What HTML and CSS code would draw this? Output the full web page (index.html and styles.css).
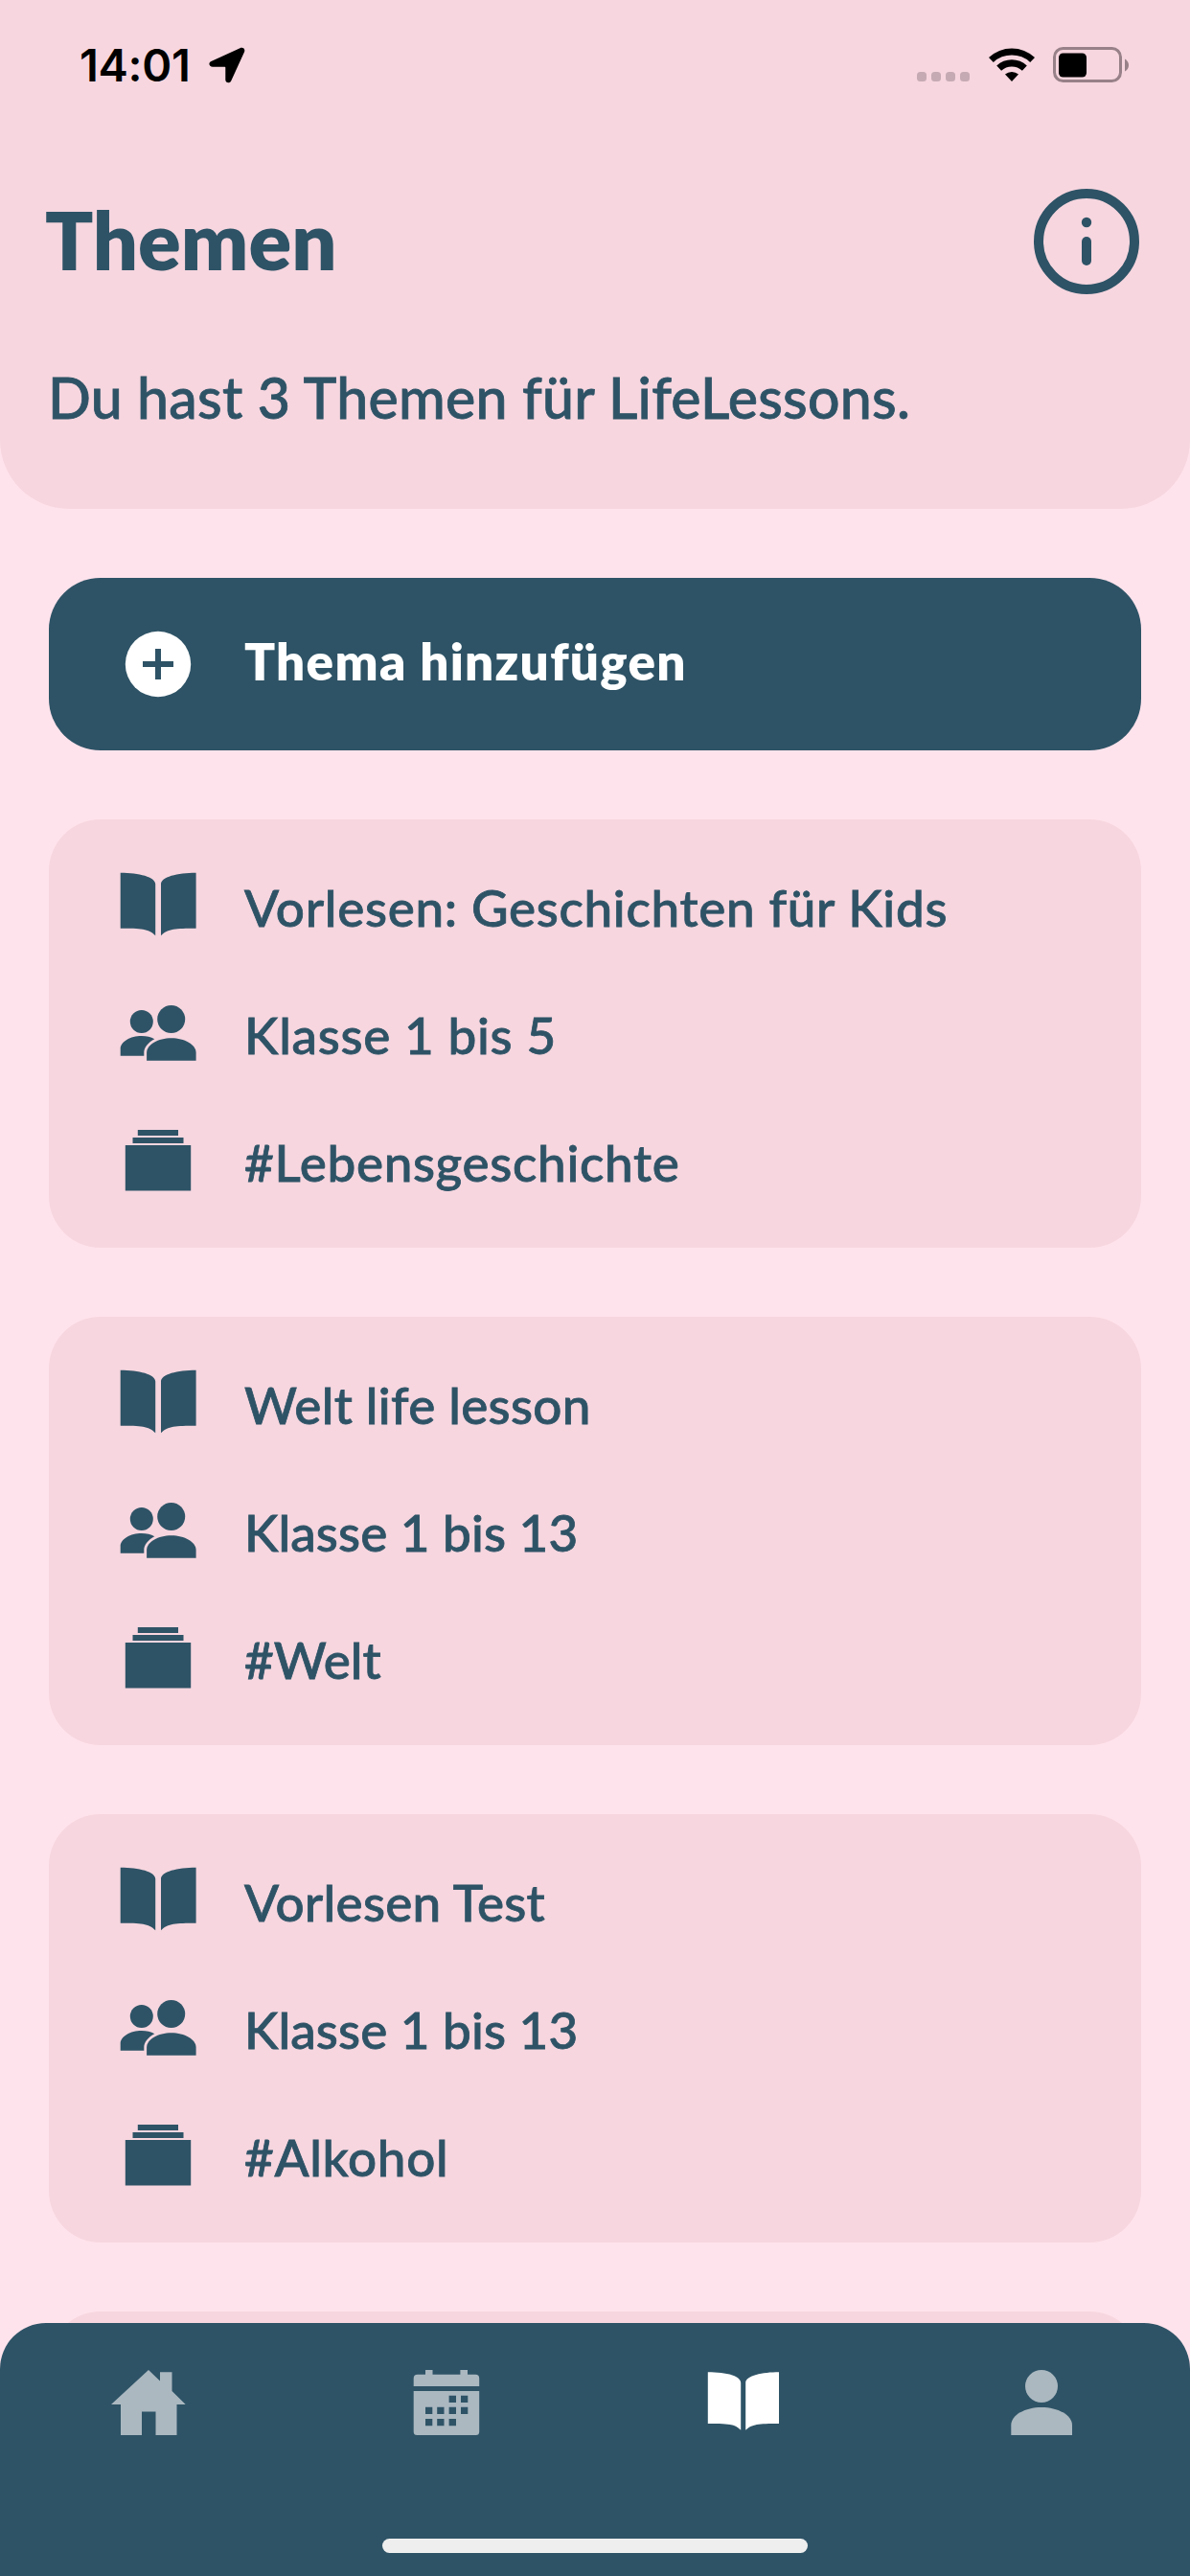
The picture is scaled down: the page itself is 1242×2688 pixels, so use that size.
FILE: index.html
```html
<!DOCTYPE html>
<html lang="de">
<head>
<meta charset="utf-8">
<title>Themen</title>
<link rel="stylesheet" href="styles.css">
</head>
<body>
<svg class="symbols" aria-hidden="true">
  <symbol id="book" viewBox="0 0 84 84"><path d="M2.7 6.7C22 6.7 39.2 11 39.2 18.5V72.2C32 65 24 64.8 2.7 64.8ZM81.6 6.7C62 6.7 45 11 45 18.5V72.2C52.500 65 60 64.800 81.600 64.800Z"/></symbol>
  <symbol id="people" viewBox="0 0 84 84"><circle cx="55.700" cy="26.500" r="14.500"/><circle cx="24.800" cy="29" r="12"/><path d="M30.100 69.800V61.500C30.100 53 42 46.300 55.800 46.300S81.600 53 81.600 61.500V69.800Z"/><path d="M2.700 64.700V57.500C2.700 50 13 44 24.800 44C30 44 34.500 45.200 38.300 47.200C32 50.500 27.300 56 27.300 61V64.700Z"/></symbol>
  <symbol id="collection" viewBox="0 0 84 84"><path d="M20.800 9H63V15H20.800ZM15.500 17H68.500V23H15.500ZM7.800 25H76.200V72.500H7.800Z"/></symbol>
</svg>
<div class="screen">
  <header class="header">
    <div class="status">
      <span class="time">14:01</span>
      <svg class="location" viewBox="0 0 38 38"><path d="M32.500 1.200C35.500-.2 38.300 2 37 5.200L23.300 35.200C21.800 38.500 17.300 37.600 17.300 34.200V21.500Q17.300 20.800 16.600 20.800H4C.2 20.800-1 16.600 2.400 15Z"/></svg>
      <svg class="signal" viewBox="0 0 56 38"><rect x="0" y="26" width="10" height="10" rx="3.500"/><rect x="15" y="26" width="10" height="10" rx="3.500"/><rect x="30" y="26" width="10" height="10" rx="3.500"/><rect x="45" y="26" width="10" height="10" rx="3.500"/></svg>
      <svg class="wifi" viewBox="0 0 48 38"><path d="M0 11A35 35 0 0 1 48 11L43.200 16A28 28 0 0 0 4.800 16ZM8.200 19.500A23 23 0 0 1 39.800 19.500L34.900 24.700A16 16 0 0 0 13.100 24.700ZM17 28.500A11 11 0 0 1 31 28.500L24 36Z"/></svg>
      <svg class="battery" viewBox="0 0 80 38"><rect class="case" x="1.500" y="1.500" width="69" height="34" rx="9"/><path class="nub" d="M75 12.500Q79 15 79 19T75 25.500Z"/><rect x="6" y="6.500" width="29" height="25" rx="4.500"/></svg>
    </div>
    <div class="heading">
      <h1 class="title">Themen</h1>
      <svg class="info" viewBox="0 0 110 110"><circle class="ring" cx="55" cy="55" r="50"/><circle cx="55" cy="35" r="5.200"/><rect x="50" y="50" width="10" height="30" rx="5"/></svg>
    </div>
    <p class="subtitle">Du hast 3 Themen für LifeLessons.</p>
  </header>

  <main class="list">
    <button class="add">
      <svg class="icon" viewBox="0 0 84 84"><circle cx="42" cy="42" r="34.200"/><path class="plus" d="M42 26V58M26 42H58"/></svg>
      <span class="add-label">Thema hinzufügen</span>
    </button>
    <section class="card">
      <div class="row"><svg class="icon"><use href="#book"/></svg><span class="label wide">Vorlesen: Geschichten für Kids</span></div>
      <div class="row"><svg class="icon"><use href="#people"/></svg><span class="label wide">Klasse 1 bis 5</span></div>
      <div class="row"><svg class="icon"><use href="#collection"/></svg><span class="label wide">#Lebensgeschichte</span></div>
    </section>
    <section class="card">
      <div class="row"><svg class="icon"><use href="#book"/></svg><span class="label medium">Welt life lesson</span></div>
      <div class="row"><svg class="icon"><use href="#people"/></svg><span class="label narrow">Klasse 1 bis 13</span></div>
      <div class="row"><svg class="icon"><use href="#collection"/></svg><span class="label">#Welt</span></div>
    </section>
    <section class="card">
      <div class="row"><svg class="icon"><use href="#book"/></svg><span class="label medium">Vorlesen Test</span></div>
      <div class="row"><svg class="icon"><use href="#people"/></svg><span class="label narrow">Klasse 1 bis 13</span></div>
      <div class="row"><svg class="icon"><use href="#collection"/></svg><span class="label wide">#Alkohol</span></div>
    </section>
    <section class="card"></section>
  </main>

  <nav class="tabs">
    <div class="tab-row">
      <svg class="icon" viewBox="0 0 84 84"><path d="M42 8L54 19.500V10.300H66.500V30L80.700 44H71.500V76H49.500V51.500H35V76H13V44H3Z"/></svg>
      <svg class="icon" viewBox="0 0 84 84"><path fill-rule="evenodd" d="M11.700 12.700H20V8H27.500V12.700H56.400V8H64V12.700H72.200Q76.200 12.700 76.200 16.700V25H7.700V16.700Q7.700 12.700 11.700 12.700ZM7.700 30H76.200V72.500Q76.200 76 72.700 76H11.200Q7.700 76 7.700 72.500ZM44.600 34.700V42H52V34.700ZM57 34.700V42H64.300V34.700ZM20 46.800V54H27.300V46.800ZM32.200 46.800V54H39.500V46.800ZM44.600 46.800V54H52V46.800ZM57 46.800V54H64.300V46.800ZM20 59V66.300H27.300V59ZM32.200 59V66.300H39.500V59ZM44.600 59V66.300H52V59Z"/></svg>
      <svg class="icon active" viewBox="0 0 84 84"><path d="M4.800 10.200C22 10.200 39.200 13.500 39.200 21.500V70.800C33 64.500 27 64 4.800 64ZM79 10.200C62 10.200 44.200 13.500 44.200 21.500V70.800C51 64.500 57 64 79 64Z"/></svg>
      <svg class="icon" viewBox="0 0 84 84"><circle cx="42" cy="25" r="17"/><path d="M10.300 76V65.500C10.300 55 25 47 42 47S74 55 74 65.500V76Z"/></svg>
    </div>
    <div class="home-indicator"></div>
  </nav>
</div>
</body>
</html>
```
FILE: styles.css
```css
* { box-sizing: border-box; }
body { margin: 0; background: #ffe3ec; color: #2e5366; font-family: Lato, "Liberation Sans", sans-serif; font-weight: 500; }
.symbols { display: none; }
.screen { height: 2688px; display: grid; grid-template-rows: 531px 1893px 264px; overflow: hidden; }

.header { background: #f7d6df; border-radius: 0 0 72px 72px; }
.status { height: 136px; padding: 0 63px 0 83px; display: flex; align-items: center; fill: #000; }
.time { width: 119px; color: #000; font: 600 47px/60px Inter, "Liberation Sans", sans-serif; letter-spacing: -0.3px; white-space: nowrap; }
.location { width: 38px; height: 38px; margin-left: 16px; }
.signal { width: 56px; height: 38px; margin-left: auto; fill: #c5aab3; }
.wifi { width: 48px; height: 38px; margin: 0 19px; }
.battery { width: 80px; height: 38px; }
.case { fill: none; stroke: #988188; stroke-width: 3; }
.nub { fill: #988188; }

.heading { height: 232px; padding: 0 53px 0 47px; display: flex; align-items: center; justify-content: space-between; }
.title { margin: 0; padding-bottom: 5px; font-size: 83px; line-height: 110px; font-weight: 800; }
.info { width: 110px; height: 110px; fill: #2e5366; }
.ring { fill: none; stroke: #2e5366; stroke-width: 10; }
.subtitle { margin: 7px 0 0 50px; font-size: 59px; line-height: 80px; letter-spacing: 0.25px; white-space: nowrap; -webkit-text-stroke: 0.8px #2e5366; }

.list { padding: 72px 51px 0; display: flex; flex-direction: column; gap: 72px; overflow: visible; min-height: 0; }
.add, .card { flex: none; border-radius: 54px; padding: 0 72px; border: 0; }
.add { height: 180px; display: flex; align-items: center; gap: 48px; background: #2e5366; color: #fff; fill: #fff; font-family: inherit; font-size: 53px; font-weight: 800; }
.add-label { padding-bottom: 7px; letter-spacing: 1.3px; }
.plus { stroke: #2e5366; stroke-width: 6; }
.icon { width: 84px; height: 84px; flex: none; }
.card { height: 447px; padding-top: 24px; background: #f7d6df; fill: #2e5366; }
.row { height: 133px; display: flex; align-items: center; gap: 48px; font-size: 53px; line-height: 64px; white-space: nowrap; }
.label { padding-top: 2px; -webkit-text-stroke: 0.8px #2e5366; }
.wide { letter-spacing: 0.7px; }
.medium { letter-spacing: 0.3px; }
.narrow { letter-spacing: 0.1px; }

.tabs { padding-top: 41px; background: #2e5366; border-radius: 48px 48px 0 0; position: relative; display: flex; flex-direction: column; }
.tab-row { display: grid; grid-template-columns: repeat(4, 1fr); justify-items: center; fill: #abb8c0; }
.active { fill: #fff; }
.home-indicator { width: 444px; height: 15px; margin: 100px auto 0; border-radius: 8px; background: #eee; }
```
